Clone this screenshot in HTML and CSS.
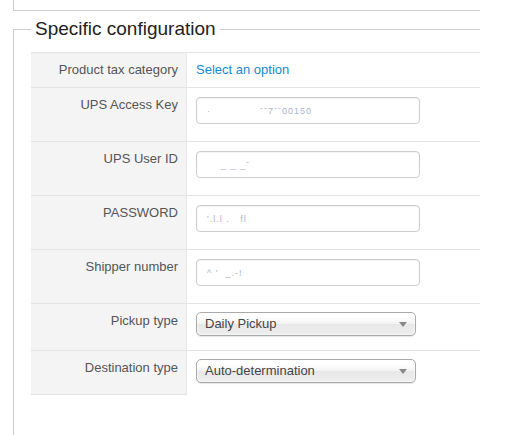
FILE: index.html
```html
<!DOCTYPE html>
<html lang="en">
<head>
	<meta charset="UTF-8">
	<title>UPS shipping method</title>
	<link rel="stylesheet" href="styles.css">
</head>
<body>
	<div class="prev-box"></div>
	<fieldset class="config">
		<legend>Specific configuration</legend>
		<table class="form-table">
			<tr class="row-link">
				<th>Product tax category</th>
				<td><a href="#" class="option-link">Select an option</a></td>
			</tr>
			<tr>
				<th>UPS Access Key</th>
				<td><div class="text-input"><span class="masked">·&nbsp;&nbsp;&nbsp;&nbsp;&nbsp;&nbsp;&nbsp;&nbsp;&nbsp;&nbsp;&nbsp;&nbsp;&nbsp;&nbsp;ˉˉ7ˉˉ00150</span></div></td>
			</tr>
			<tr>
				<th>UPS User ID</th>
				<td><div class="text-input"><span class="masked">&nbsp;&nbsp;&nbsp;&nbsp;_ _ _ˉ</span></div></td>
			</tr>
			<tr>
				<th>PASSWORD</th>
				<td><div class="text-input"><span class="masked">'.l.l&nbsp;.&nbsp;&nbsp;&nbsp;fl</span></div></td>
			</tr>
			<tr>
				<th>Shipper number</th>
				<td><div class="text-input"><span class="masked">^ '&nbsp;&nbsp;_.-!</span></div></td>
			</tr>
			<tr class="row-select">
				<th>Pickup type</th>
				<td><div class="chosen"><span>Daily Pickup</span><b></b></div></td>
			</tr>
			<tr class="row-select row-last">
				<th>Destination type</th>
				<td><div class="chosen"><span>Auto-determination</span><b></b></div></td>
			</tr>
		</table>
	</fieldset>
</body>
</html>
```

FILE: styles.css
```css
body{margin: 0;background: #fff;font-family: "Liberation Sans", Arial, sans-serif;font-size: 13px;color: #555;}

/* box above the fieldset, only its lower edge shows */
.prev-box{margin-left: 13px;width: 466px;height: 10px;border-left: 1px solid #ccc;border-bottom: 1px solid #ccc;}

.config{margin: 6px 0 0 13px;padding: 11px 0 0 17px;width: 467px;min-height: 420px;box-sizing: border-box;border: 1px solid #ccc;border-right: none;border-bottom: none;}
.config legend{padding: 0 4px;font-size: 19px;line-height: 24px;color: #222;}

.form-table{width: 100%;border-collapse: separate;border-spacing: 0;}
.form-table th,.form-table td{vertical-align: top;line-height: 18px;padding: 8px 8px 8px 10px;border-top: 1px solid #e3e3e3;}
.form-table th{width: 137px;text-align: right;font-weight: normal;background: #f4f4f4;border-right: 1px solid #e8e8e8;color: #555;}
.form-table td{padding-left: 9px;}
.form-table .row-last th{border-bottom: 1px solid #e3e3e3;}

.option-link{color: #1689d4;text-decoration: none;}

.text-input{margin: 1px 0 9px;width: 224px;height: 27px;box-sizing: border-box;border: 1px solid #ccc;border-radius: 4px;box-shadow: inset 0 1px 1px rgba(0,0,0,0.05);padding: 3px 10px;}
.masked{font-size: 9px;line-height: 12px;color: #aab4ce;letter-spacing: 1px;white-space: nowrap;}

.chosen{position: relative;margin-bottom: 6px;width: 220px;height: 24px;box-sizing: border-box;border: 1px solid #aaa;border-radius: 5px;background: linear-gradient(#fff 20%, #f2f2f2 50%, #e8e8e8 52%, #eee);box-shadow: 0 0 3px #fff inset, 0 1px 1px rgba(0,0,0,0.1);padding-left: 8px;line-height: 22px;color: #444;}
.row-last .chosen{margin-bottom: 4px;}
.chosen b{position: absolute;right: 8px;top: 9px;width: 0;height: 0;border-left: 4px solid transparent;border-right: 4px solid transparent;border-top: 5px solid #888;}
```
